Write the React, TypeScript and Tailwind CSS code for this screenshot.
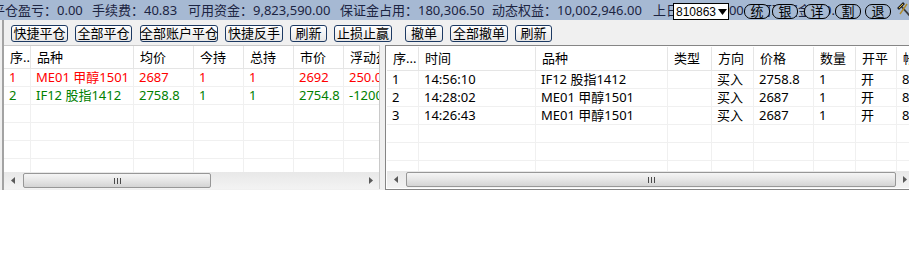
import React from "react";

const FONT = "font-['Noto_Sans','Noto_Sans_CJK_SC',sans-serif]";

type Col = { w: string; label: string };
type Row = { color: string; cells: string[] };

const leftCols: Col[] = [
  { w: "w-[27px]", label: "序.." },
  { w: "w-[103px]", label: "品种" },
  { w: "w-[60px]", label: "均价" },
  { w: "w-[50px]", label: "今持" },
  { w: "w-[50px]", label: "总持" },
  { w: "w-[50px]", label: "市价" },
  { w: "w-[90px]", label: "浮动盈亏" },
];

const leftRows: Row[] = [
  { color: "text-[#ff0000]", cells: ["1", "ME01 甲醇1501", "2687", "1", "1", "2692", "250.00"] },
  { color: "text-[#008000]", cells: ["2", "IF12 股指1412", "2758.8", "1", "1", "2754.8", "-1200.00"] },
];

const rightCols: Col[] = [
  { w: "w-[32px]", label: "序..." },
  { w: "w-[117px]", label: "时间" },
  { w: "w-[132px]", label: "品种" },
  { w: "w-[44px]", label: "类型" },
  { w: "w-[42px]", label: "方向" },
  { w: "w-[60px]", label: "价格" },
  { w: "w-[42px]", label: "数量" },
  { w: "w-[41px]", label: "开平" },
  { w: "w-[80px]", label: "帐号" },
];

const rightRows: Row[] = [
  { color: "text-black", cells: ["1", "14:56:10", "IF12 股指1412", "", "买入", "2758.8", "1", "开", "810863"] },
  { color: "text-black", cells: ["2", "14:28:02", "ME01 甲醇1501", "", "买入", "2687", "1", "开", "810863"] },
  { color: "text-black", cells: ["3", "14:26:43", "ME01 甲醇1501", "", "买入", "2687", "1", "开", "810863"] },
];

function ListView({
  cols,
  rows,
  headerH,
  bodyH,
}: {
  cols: Col[];
  rows: Row[];
  headerH: string;
  bodyH: string;
}) {
  const total = 7;
  const all: Row[] = [...rows];
  while (all.length < total) all.push({ color: "text-black", cells: cols.map(() => "") });
  return (
    <div className="flex flex-col overflow-hidden bg-white">
      <div className={`flex shrink-0 ${headerH} border-b border-[#e5e5e5]`}>
        {cols.map((c, i) => (
          <div
            key={i}
            className={`${c.w} shrink-0 h-full flex items-center pl-[6px] border-r border-[#e5e5e5] overflow-hidden whitespace-nowrap`}
          >
            {c.label}
          </div>
        ))}
      </div>
      <div className={`${bodyH} overflow-hidden`}>
        {all.map((r, ri) => (
          <div key={ri} className={`flex h-[18px] border-b border-[#f0f0f0] ${r.color}`}>
            {cols.map((c, ci) => (
              <div
                key={ci}
                className={`${c.w} shrink-0 h-full flex items-center pl-[5px] border-r border-[#f0f0f0] overflow-hidden whitespace-nowrap`}
              >
                {r.cells[ci]}
              </div>
            ))}
          </div>
        ))}
      </div>
    </div>
  );
}

function ArrowLeft() {
  return (
    <svg width="4" height="7" viewBox="0 0 4 7">
      <polygon points="4,0 0,3.5 4,7" fill="#5a5a5a" />
    </svg>
  );
}
function ArrowRight() {
  return (
    <svg width="4" height="7" viewBox="0 0 4 7">
      <polygon points="0,0 4,3.5 0,7" fill="#5a5a5a" />
    </svg>
  );
}

function Thumb({ w }: { w: string }) {
  return (
    <div
      className={`${w} shrink-0 h-[15px] mt-[1px] ml-[2px] rounded-[2px] border border-[#979797] bg-linear-to-b from-[#f5f5f5] via-[#e6e6e6] to-[#d4d4d4] flex items-center justify-center gap-[2px]`}
    >
      <span className="w-[1px] h-[6px] bg-[#4a4a4a]" />
      <span className="w-[1px] h-[6px] bg-[#4a4a4a]" />
      <span className="w-[1px] h-[6px] bg-[#4a4a4a]" />
    </div>
  );
}

function HScroll({ thumb }: { thumb: string }) {
  return (
    <div className="h-[17px] shrink-0 flex bg-linear-to-b from-[#e8e8e8] to-[#f3f3f3]">
      <div className="w-[17px] shrink-0 flex items-center justify-center">
        <ArrowLeft />
      </div>
      <Thumb w={thumb} />
      <div className="flex-1" />
      <div className="w-[17px] shrink-0 flex items-center justify-center">
        <ArrowRight />
      </div>
    </div>
  );
}

function TopButton({ label }: { label: string }) {
  return (
    <div className="w-[26px] h-[15px] rounded-[7px] border border-black bg-[#a6b9d3] flex items-center justify-center text-black text-[13px]">
      {label}
    </div>
  );
}

function Hammer() {
  return (
    <svg width="14" height="15" viewBox="0 0 14 15">
      <line x1="4" y1="4" x2="13" y2="14" stroke="#3a3a3a" strokeWidth="1.8" />
      <line x1="1" y1="7" x2="7" y2="1" stroke="#222" strokeWidth="2.6" />
      <line x1="2" y1="6" x2="6" y2="2" stroke="#e0b83a" strokeWidth="1" />
      <line x1="10" y1="2" x2="3" y2="12" stroke="#b08a2a" strokeWidth="1.4" />
    </svg>
  );
}

function TopBar() {
  return (
    <div className="relative h-[20px] bg-[#a6b9d3] flex items-center whitespace-nowrap text-[#1c2442] overflow-hidden">
      <span className="ml-[-8px] w-[100px] shrink-0">平仓盈亏：0.00</span>
      <span className="w-[96px] shrink-0">手续费：40.83</span>
      <span className="w-[152px] shrink-0">可用资金：9,823,590.00</span>
      <span className="w-[152px] shrink-0">保证金占用：180,306.50</span>
      <span className="w-[161px] shrink-0">动态权益：10,002,946.00</span>
      <span className="w-[106px] shrink-0">上日权益：0.00</span>
      <span className="shrink-0">可取资金：0.00</span>

      <div className="absolute left-[673px] top-[3px] w-[56px] h-[17px] bg-white border border-black flex items-center pl-[2px] text-black font-['Liberation_Sans',sans-serif] text-[12px]">
        <span>810863</span>
        <svg className="ml-[2px]" width="9" height="6" viewBox="0 0 9 6">
          <polygon points="0,0 9,0 4.5,6" fill="#000" />
        </svg>
      </div>
      <div className="absolute left-[744px] top-[4px] flex">
        <TopButton label="统" />
        <div className="w-[2px]" />
        <TopButton label="银" />
        <div className="w-[6px]" />
        <TopButton label="详" />
        <div className="w-[5px]" />
        <TopButton label="割" />
        <div className="w-[4px]" />
        <TopButton label="退" />
      </div>
      <div className="absolute left-[897px] top-[2px]">
        <Hammer />
      </div>
    </div>
  );
}

function ToolButton({ label, w, ml }: { label: string; w: string; ml: string }) {
  return (
    <div
      className={`${w} ${ml} shrink-0 h-[17px] rounded-[3px] border border-[#1d3a63] bg-linear-to-b from-[#ffffff] to-[#e6e6e6] flex items-center justify-center text-black whitespace-nowrap`}
    >
      {label}
    </div>
  );
}

export default function App() {
  return (
    <div className={`w-[909px] h-[255px] overflow-hidden bg-white text-[13px] leading-none text-black ${FONT}`}>
      <TopBar />
      <div className="h-[170px] bg-[#f0f0f0] pl-[2px] flex">
        <div className="flex-1 border-l-2 border-[#a3a3a3] flex flex-col overflow-hidden">
          <div className="h-[25px] shrink-0 flex pt-[5px]">
            <ToolButton label="快捷平仓" w="w-[57px]" ml="ml-[7px]" />
            <ToolButton label="全部平仓" w="w-[57px]" ml="ml-[7px]" />
            <ToolButton label="全部账户平仓" w="w-[78px]" ml="ml-[8px]" />
            <ToolButton label="快捷反手" w="w-[58px]" ml="ml-[7px]" />
            <ToolButton label="刷新" w="w-[37px]" ml="ml-[7px]" />
            <ToolButton label="止损止赢" w="w-[58px]" ml="ml-[7px]" />
            <ToolButton label="撤单" w="w-[38px]" ml="ml-[13px]" />
            <ToolButton label="全部撤单" w="w-[58px]" ml="ml-[7px]" />
            <ToolButton label="刷新" w="w-[37px]" ml="ml-[7px]" />
          </div>
          <div className="h-[145px] flex">
            <div className="w-[376px] shrink-0 h-[144px] flex flex-col border-t border-r border-[#c9c9c9] bg-white">
              <ListView cols={leftCols} rows={leftRows} headerH="h-[23px]" bodyH="h-[103px]" />
              <HScroll thumb="w-[188px]" />
            </div>
            <div className="w-[5px] shrink-0" />
            <div className="w-[530px] shrink-0 h-[145px] border border-[#858585] p-[1px] bg-white flex flex-col">
              <ListView cols={rightCols} rows={rightRows} headerH="h-[24px]" bodyH="h-[100px]" />
              <HScroll thumb="w-[490px]" />
            </div>
          </div>
        </div>
      </div>
    </div>
  );
}
